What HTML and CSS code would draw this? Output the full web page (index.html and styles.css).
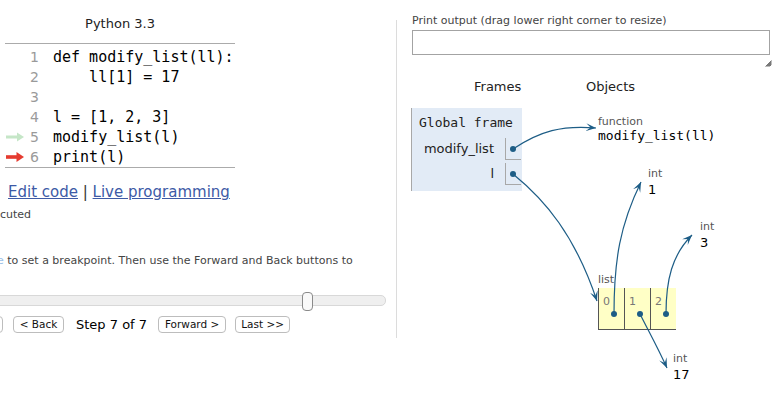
FILE: index.html
```html
<!DOCTYPE html>
<html>
<head>
<meta charset="utf-8">
<link rel="stylesheet" href="styles.css">
</head>
<body>
<div class="page">
  <section class="left">
    <div class="lang">Python 3.3</div>
    <div class="code">
      <div class="line"><span class="mark"></span><span class="num">1</span><span class="src">def modify_list(ll):</span></div>
      <div class="line"><span class="mark"></span><span class="num">2</span><span class="src">    ll[1] = 17</span></div>
      <div class="line"><span class="mark"></span><span class="num">3</span><span class="src"></span></div>
      <div class="line"><span class="mark"></span><span class="num">4</span><span class="src">l = [1, 2, 3]</span></div>
      <div class="line"><span class="mark"><svg class="arrow" width="18" height="10" viewBox="0 0 18 10"><rect x="0" y="3.5" width="12" height="3" fill="#c5e6c7"/><polygon points="11,0.5 18,5 11,9.5" fill="#c5e6c7"/></svg></span><span class="num">5</span><span class="src">modify_list(l)</span></div>
      <div class="line"><span class="mark"><svg class="arrow" width="18" height="10" viewBox="0 0 18 10"><rect x="0" y="3.2" width="12" height="3.6" fill="#e53b30"/><polygon points="10.5,0 18,5 10.5,10" fill="#e53b30"/></svg></span><span class="num">6</span><span class="src">print(l)</span></div>
    </div>
    <div class="links"><a href="#">Edit code</a> | <a href="#">Live programming</a></div>
    <p class="legend">cuted</p>
    <p class="hint"><span class="faded">e</span> to set a breakpoint. Then use the Forward and Back buttons to</p>
    <div class="slider"><div class="track"></div><div class="thumb"></div></div>
    <div class="controls">
      <button class="btn first">&lt;&lt; First</button>
      <button class="btn back">&lt; Back</button>
      <span class="step">Step 7 of 7</span>
      <button class="btn fwd">Forward &gt;</button>
      <button class="btn last">Last &gt;&gt;</button>
    </div>
  </section>
  <div class="divider"></div>
  <section class="right">
    <div class="out-label">Print output (drag lower right corner to resize)</div>
    <div class="out-box"></div>
    <div class="grip-row"><svg class="grip" width="7" height="7" viewBox="0 0 7 7"><path d="M0.5,6.5 L6.5,0.5 M2.5,6.5 L6.5,2.5 M4.5,6.5 L6.5,4.5 M1.5,6.5 L6.5,1.5 M3.5,6.5 L6.5,3.5" stroke="#555" stroke-width="0.8"/></svg></div>
    <div class="viz">
      <div class="viz-head"><span class="h-frames">Frames</span><span class="h-objects">Objects</span></div>
      <div class="frame">
        <div class="frame-title">Global frame</div>
        <div class="vars">
          <span class="vname">modify_list</span><span class="vcell"></span>
          <span class="vname">l</span><span class="vcell"></span>
        </div>
      </div>
      <div class="node fn-node"><div class="tlabel">function</div><div class="fval">modify_list(ll)</div></div>
      <div class="node int1"><div class="tlabel">int</div><div class="pval">1</div></div>
      <div class="node int3"><div class="tlabel">int</div><div class="pval">3</div></div>
      <div class="node int17"><div class="tlabel">int</div><div class="pval">17</div></div>
      <div class="node list-node">
        <div class="tlabel">list</div>
        <div class="cells">
          <div class="cell"><span class="idx">0</span></div>
          <div class="cell"><span class="idx">1</span></div>
          <div class="cell"><span class="idx">2</span></div>
        </div>
      </div>
      <svg class="wires" width="364" height="323" viewBox="411 78 364 323">
        <defs>
          <marker id="ah" markerUnits="userSpaceOnUse" markerWidth="11" markerHeight="9" refX="10" refY="4" orient="auto">
            <path d="M0,0 L10,4 L0,8 L4.5,4 z" fill="#1d5d86"/>
          </marker>
        </defs>
        <g fill="none" stroke="#1d5d86" stroke-width="1.2" marker-end="url(#ah)">
          <path d="M513,149 C540,131 562,125 596,128"/>
          <path d="M513,174 C545,200 575,235 597,301"/>
          <path d="M614,314 C614,260 620,225 641,182"/>
          <path d="M666,314 C666,280 672,255 692,235"/>
          <path d="M640,314 C648,330 658,348 667,368"/>
        </g>
        <g fill="#1d5d86">
          <circle cx="513" cy="149" r="3"/>
          <circle cx="513" cy="174" r="3"/>
          <circle cx="614" cy="314" r="3"/>
          <circle cx="640" cy="314" r="3"/>
          <circle cx="666" cy="314" r="3"/>
        </g>
      </svg>
    </div>
  </section>
</div>
</body>
</html>
```
FILE: styles.css
```css
* { box-sizing: border-box; }
html, body { margin: 0; padding: 0; background: #fff; }
body {
  font-family: "DejaVu Sans", Verdana, sans-serif;
  color: #000;
  width: 775px;
  height: 401px;
  overflow: hidden;
}
.page { display: flex; align-items: flex-start; }

/* left column */
.left { width: 396px; flex: none; padding-top: 16px; }
.lang {
  margin-left: 5px; width: 230px; text-align: center;
  font-size: 13px; line-height: 16px; color: #222;
}
.code {
  margin: 11px 0 0 5px; width: 230px;
  border-top: 1px solid #ababab; border-bottom: 1px solid #ababab;
  padding-top: 3px;
}
.line { display: flex; align-items: center; height: 20px; }
.mark { width: 22px; height: 20px; display: flex; align-items: center; padding-left: 1px; }
.num {
  width: 12px; text-align: right; color: #9a9a9a;
  font-size: 14px; line-height: 20px;
}
.src {
  margin-left: 14px; white-space: pre;
  font-family: "DejaVu Sans Mono", monospace; font-size: 15px; line-height: 20px; color: #000;
}
.links { margin: 15px 0 0 8px; font-size: 15px; line-height: 18px; color: #333; }
.links a { color: #3d5aa6; text-decoration: underline; }
.legend { margin: 7px 0 0 0; font-size: 11px; line-height: 14px; color: #444; }
.hint { margin: 32px 0 0 -3px; font-size: 11px; line-height: 14px; color: #444; white-space: nowrap; }
.faded { color: #9cc0e8; }
.slider { position: relative; margin: 27px 0 0 -10px; width: 396px; height: 11px; }
.track { height: 11px; background: #efefef; border: 1px solid #d8d8d8; border-radius: 5px; }
.thumb {
  position: absolute; left: 312px; top: -3px; width: 11px; height: 19px;
  background: #f9f9f9; border: 1px solid #8a8a8a; border-radius: 4px;
}
.controls { display: flex; align-items: center; margin-top: 10px; height: 17px; }
.btn {
  height: 17px; padding: 0; background: #fff; border: 1px solid #bdbdbd; border-radius: 4px;
  font-family: "DejaVu Sans", sans-serif; font-size: 10.5px; color: #111; line-height: 15px;
}
.first { width: 50px; margin-left: -47px; }
.back { width: 51px; margin-left: 10px; }
.step { margin-left: 12px; font-size: 13px; line-height: 17px; color: #000; }
.fwd { width: 68px; margin-left: 11px; }
.last { width: 55px; margin-left: 9px; }

.divider { width: 1px; height: 318px; margin-top: 20px; background: #dcdcdc; flex: none; }

/* right column */
.right { margin-left: 14px; width: 364px; flex: none; padding-top: 14px; }
.out-label { margin-left: 1px; font-size: 11px; line-height: 14px; color: #444; }
.out-box { margin: 2px 0 0 1px; width: 358px; height: 25px; border: 1px solid #a3a3a3; }
.grip-row { width: 361px; height: 12px; display: flex; justify-content: flex-end; align-items: flex-end; }
.grip { display: block; }
.viz { position: relative; margin-top: 11px; height: 323px; }
.viz-head { display: flex; font-size: 13px; line-height: 16px; color: #222; padding-top: 1px; }
.h-frames { margin-left: 63px; width: 112px; }
.frame {
  margin-top: 13px; width: 111px;
  background: #e2ebf6; border-left: 1px solid #a8a8a8;
  padding: 7px 1px 6px 7px;
}
.frame-title { font-family: "DejaVu Sans Mono", monospace; font-size: 13px; line-height: 16px; color: #222; }
.vars {
  margin-top: 7px; display: grid; grid-template-columns: 75px 16px;
  column-gap: 11px; row-gap: 3px; align-items: center;
}
.vname { text-align: right; font-size: 13px; line-height: 16px; color: #222; }
.vcell { height: 22px; border-left: 1px solid #a8a8a8; border-bottom: 1px solid #a8a8a8; }

.node { position: absolute; }
.tlabel { font-size: 11px; line-height: 13px; color: #555; }
.fval { font-family: "DejaVu Sans Mono", monospace; font-size: 13px; line-height: 16px; color: #000; }
.pval { margin-top: 2px; font-size: 13px; line-height: 16px; color: #000; }
.fn-node { left: 187px; top: 37px; }
.int1 { left: 237px; top: 89px; }
.int3 { left: 289px; top: 142px; }
.int17 { left: 262px; top: 274px; }
.list-node { left: 187px; top: 195px; }
.cells { display: flex; margin-top: 2px; }
.cell {
  width: 26px; height: 42px; background: #ffffc6;
  border-left: 1px solid #555; border-bottom: 1px solid #555;
  padding: 2px 0 0 4px;
}
.idx { font-size: 11px; line-height: 13px; color: #777; }
.wires { position: absolute; left: 0; top: 0; overflow: visible; pointer-events: none; }
```
